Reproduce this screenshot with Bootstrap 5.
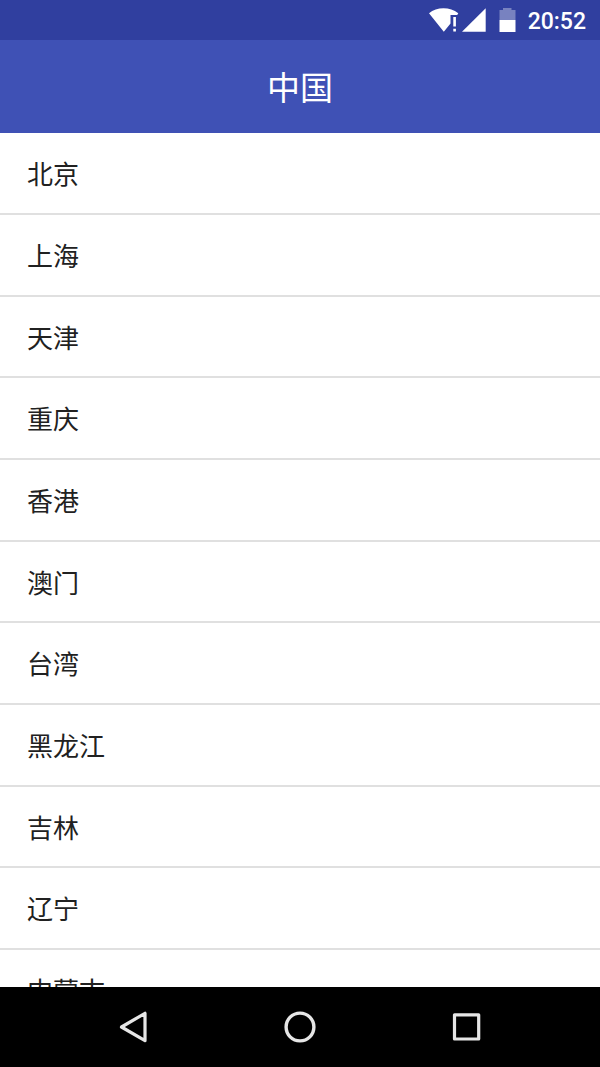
<!DOCTYPE html>
<html lang="zh-CN">
<head>
<meta charset="utf-8">
<meta name="viewport" content="width=device-width, initial-scale=1">
<title>中国</title>
<link href="https://cdn.jsdelivr.net/npm/bootstrap@5.3.0/dist/css/bootstrap.min.css" rel="stylesheet">
<style>
  body { font-family: Roboto, "Noto Sans CJK SC", sans-serif; color: #212121; }
  .status-bar { height: 40px; background: #303f9f; padding-right: 14px; }
  .clock { font-size: 23px; line-height: 36px; padding-top: 4px; font-weight: 500; margin-left: 12px; }
  .app-bar { height: 93px; background: #3f51b5; padding-top: 4px; }
  .app-title { font-size: 33px; line-height: 48px; font-weight: 400; }
  .region-list { display: grid; grid-auto-rows: 82px 82px 81px; align-content: start; }
  .region-list .list-group-item { padding: 4px 27px 0; font-size: 26px; line-height: 40px; color: #212121; border: 0 solid #e0e0e0; border-bottom-width: 2px; }
  .region-list .list-group-item:last-child { border-bottom-width: 2px; }
  .system-nav { height: 80px; background: #000; padding: 0 50px; }
  .system-nav .btn { border: 0; }
</style>
</head>
<body class="vh-100 d-flex flex-column overflow-hidden bg-white">
  <div class="status-bar d-flex align-items-center justify-content-end text-white flex-shrink-0">
    <svg width="88" height="40" viewBox="0 0 88 40" fill="#fff" aria-hidden="true">
      <path d="M1 13.200C5 10 10 8.200 15.500 8.200S26 10 30.300 13.200L29.200 15H22.500V23.600L15.800 31.700Z"/>
      <path d="M25.300 17h2.600v9.600h-2.600zM25.300 28.800h2.600v2.700h-2.600z"/>
      <path d="M57.700 8.300V31.700H34z"/>
      <path fill-opacity=".35" d="M72 10h3V8h8.500v2h4V20H71.500V10z"/>
      <path d="M71.500 20H87.500v12H71.500z"/>
    </svg>
    <span class="clock">20:52</span>
  </div>

  <header class="app-bar d-flex align-items-center justify-content-center text-white flex-shrink-0">
    <h1 class="app-title m-0">中国</h1>
  </header>

  <main class="region-list list-group list-group-flush flex-fill overflow-hidden">
    <a href="#" class="list-group-item d-flex align-items-center">北京</a>
    <a href="#" class="list-group-item d-flex align-items-center">上海</a>
    <a href="#" class="list-group-item d-flex align-items-center">天津</a>
    <a href="#" class="list-group-item d-flex align-items-center">重庆</a>
    <a href="#" class="list-group-item d-flex align-items-center">香港</a>
    <a href="#" class="list-group-item d-flex align-items-center">澳门</a>
    <a href="#" class="list-group-item d-flex align-items-center">台湾</a>
    <a href="#" class="list-group-item d-flex align-items-center">黑龙江</a>
    <a href="#" class="list-group-item d-flex align-items-center">吉林</a>
    <a href="#" class="list-group-item d-flex align-items-center">辽宁</a>
    <a href="#" class="list-group-item d-flex align-items-center">内蒙古</a>
  </main>

  <nav class="system-nav d-flex flex-shrink-0" aria-label="系统导航">
    <button type="button" class="btn flex-fill p-0" aria-label="返回">
      <svg width="36" height="36" viewBox="0 0 36 36" fill="none" stroke="#e6e6e6" stroke-width="3.200" stroke-linejoin="round"><path d="M6.500 18 30 4.300V31.700z"/></svg>
    </button>
    <button type="button" class="btn flex-fill p-0" aria-label="主页">
      <svg width="36" height="36" viewBox="0 0 36 36" fill="none" stroke="#e6e6e6" stroke-width="3.400"><circle cx="18" cy="18" r="13.900"/></svg>
    </button>
    <button type="button" class="btn flex-fill p-0" aria-label="最近任务">
      <svg width="36" height="36" viewBox="0 0 36 36" fill="none" stroke="#e6e6e6" stroke-width="3.200" stroke-linejoin="round"><path d="M5.500 5.800H29.700V30H5.500z"/></svg>
    </button>
  </nav>
<script src="https://cdn.jsdelivr.net/npm/bootstrap@5.3.0/dist/js/bootstrap.bundle.min.js"></script>
</body>
</html>
